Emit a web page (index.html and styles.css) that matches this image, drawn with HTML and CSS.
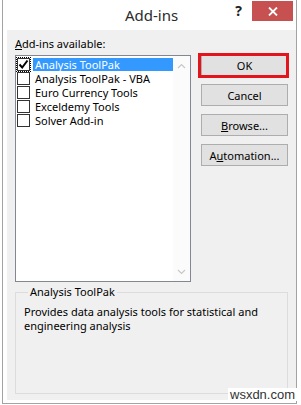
FILE: index.html
```html
<!DOCTYPE html>
<html lang="en">
<head>
    <meta charset="UTF-8">
    <meta name="viewport" content="width=device-width, initial-scale=1.0">
    <title>Add-ins</title>
    <link rel="stylesheet" href="styles.css">
</head>
<body>
    <div class="window">
        <div class="titlebar">
            <span></span>
            <span class="title">Add-ins</span>
            <div class="controls">
                <span class="help">?</span>
                <span class="close">
                    <svg width="10" height="9" viewBox="0 0 10 9">
                        <path d="M1 0.5 L9 8.5 M9 0.5 L1 8.5" stroke="#ffffff" stroke-width="1.8" fill="none"/>
                    </svg>
                </span>
            </div>
        </div>

        <div class="client">
            <div class="main">
                <div class="left">
                    <label class="caption"><u>A</u>dd-ins available:</label>
                    <div class="listbox">
                        <ul class="items">
                            <li class="item selected">
                                <span class="check checked">
                                    <svg width="11" height="11" viewBox="0 0 11 11">
                                        <path d="M1.5 5.5 L4.2 8.5 L9.5 1.5" stroke="#000000" stroke-width="2" fill="none"/>
                                    </svg>
                                </span>
                                <span class="name">Analysis ToolPak</span>
                            </li>
                            <li class="item"><span class="check"></span><span class="name">Analysis ToolPak - VBA</span></li>
                            <li class="item"><span class="check"></span><span class="name">Euro Currency Tools</span></li>
                            <li class="item"><span class="check"></span><span class="name">Exceldemy Tools</span></li>
                            <li class="item"><span class="check"></span><span class="name">Solver Add-in</span></li>
                        </ul>
                        <div class="scrollbar">
                            <svg width="9" height="6" viewBox="0 0 9 6">
                                <path d="M1 5 L4.5 1.5 L8 5" stroke="#c8c8c8" stroke-width="1.2" fill="none"/>
                            </svg>
                            <svg width="9" height="6" viewBox="0 0 9 6">
                                <path d="M1 1 L4.5 4.5 L8 1" stroke="#c8c8c8" stroke-width="1.2" fill="none"/>
                            </svg>
                        </div>
                    </div>
                </div>

                <div class="buttons">
                    <button class="btn">OK</button>
                    <button class="btn">Cancel</button>
                    <button class="btn"><u>B</u>rowse...</button>
                    <button class="btn">A<u>u</u>tomation...</button>
                    <span class="highlight"></span>
                </div>
            </div>

            <fieldset class="details">
                <legend>Analysis ToolPak</legend>
                <p>Provides data analysis tools for statistical and engineering analysis</p>
            </fieldset>
        </div>
    </div>

    <span class="watermark">wsxdn.com</span>
</body>
</html>
```

FILE: styles.css
```css
body {
    margin: 0;
    font-family: "Segoe UI", "Noto Sans", "Open Sans", sans-serif;
    font-size: 11px;
    color: #000000;
    background-color: #ffffff;
    position: relative;
}

.window {
    margin-left: 2px;
    width: 295px;
    box-sizing: border-box;
    border: 1px solid #a3a3a3;
    border-top: none;
    background-color: #ffffff;
}

.titlebar {
    height: 30px;
    display: grid;
    grid-template-columns: 1fr auto 1fr;
    align-items: start;
}

.title {
    padding-top: 5px;
    padding-left: 4px;
    font-size: 15px;
    line-height: 20px;
    color: #2b2b2b;
}

.controls {
    justify-self: end;
    display: flex;
    align-items: flex-start;
    margin-right: 3px;
}

.help {
    margin-top: 4px;
    margin-right: 10px;
    font-weight: bold;
    font-size: 14px;
    line-height: 14px;
    color: #222222;
}

.close {
    margin-top: 1px;
    width: 41px;
    height: 20px;
    background-color: #c75050;
    display: flex;
    align-items: center;
    justify-content: center;
}

.client {
    margin: 0 0 3px 4px;
    height: 370px;
    padding: 0 8px;
    background-color: #f0f0f0;
}

.main {
    display: flex;
}

.caption {
    display: block;
    padding-top: 6px;
    line-height: 16px;
}

.listbox {
    margin-top: 3px;
    width: 176px;
    height: 227px;
    box-sizing: border-box;
    border: 1px solid #828790;
    background-color: #ffffff;
    display: flex;
}

.items {
    list-style: none;
    margin: 0;
    padding: 0;
    flex: 1;
}

.item {
    height: 14px;
    display: flex;
    align-items: center;
    padding-left: 1px;
}

.item:first-child {
    margin-top: 1px;
}

.check {
    width: 11px;
    height: 11px;
    border: 1px solid #333333;
    background-color: #ffffff;
    display: flex;
    align-items: center;
    justify-content: center;
}

.check.checked {
    outline: 1px dotted #000000;
    outline-offset: 0;
}

.name {
    margin-left: 3px;
    padding: 0 2px;
    flex: 1;
    line-height: 13px;
}

.selected .name {
    background-color: #3399ff;
    color: #ffffff;
}

.scrollbar {
    width: 17px;
    background-color: #fbfbfb;
    display: flex;
    flex-direction: column;
    justify-content: space-between;
    align-items: center;
    padding: 7px 0 6px;
}

.buttons {
    position: relative;
    margin-left: 10px;
    padding-top: 24px;
    display: flex;
    flex-direction: column;
    gap: 8px;
}

.btn {
    width: 87px;
    height: 22px;
    padding: 0;
    font-family: inherit;
    font-size: 11px;
    color: #000000;
    background-color: #e1e1e1;
    border: 1px solid #adadad;
}

.highlight {
    position: absolute;
    left: -3px;
    top: 23px;
    width: 91px;
    height: 25px;
    box-sizing: border-box;
    border: 3px solid #e3141b;
}

.details {
    margin: 3px 0 0;
    width: 273px;
    height: 109px;
    box-sizing: border-box;
    padding: 6px 8px 5px;
    border: 1px solid #dcdcdc;
}

.details legend {
    margin-left: 4px;
    padding: 0 2px;
    line-height: 14px;
}

.details p {
    margin: 0;
    line-height: 14px;
}

.watermark {
    position: absolute;
    left: 228px;
    top: 388px;
    padding: 0 2px;
    background-color: #ffffff;
    color: #333333;
    font-family: "Liberation Sans", Arial, sans-serif;
    font-size: 13px;
    line-height: 13px;
}
```
